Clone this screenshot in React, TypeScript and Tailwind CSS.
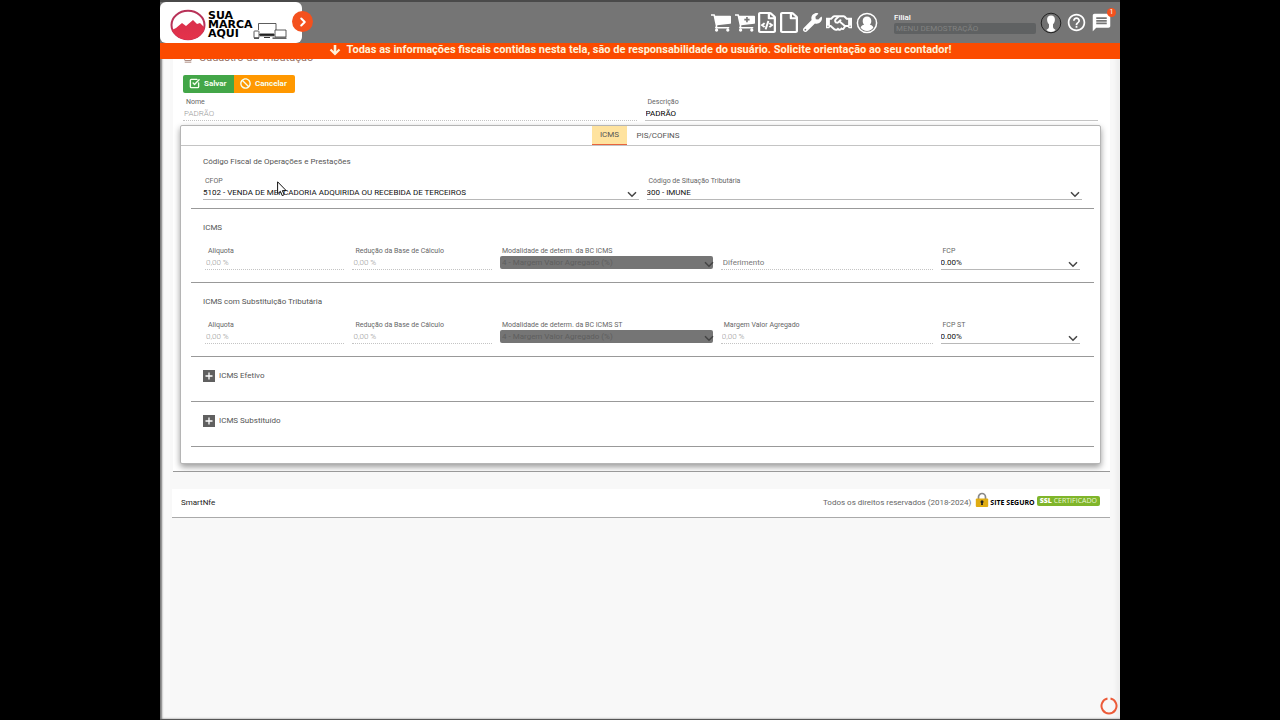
import type { ReactNode } from "react";
import { FaBan, FaRegFile, FaRegFileCode, FaRegHandshake, FaWrench } from "react-icons/fa";
import { MdHelpOutline, MdMessage } from "react-icons/md";
import { ChevronRight, SquareCheckBig, Stamp } from "lucide-react";

const CART =
  "M640 1536q0 52-38 90t-90 38-90-38-38-90 38-90 90-38 90 38 38 90zm896 0q0 52-38 90t-90 38-90-38-38-90 38-90 90-38 90 38 38 90zm128-1088v512q0 24-16.5 42.5t-40.5 21.5l-1044 122q13 60 13 70 0 16-24 64h920q26 0 45 19t19 45-19 45-45 19h-1024q-26 0-45-19t-19-45q0-11 8-31.5t16-36 21.5-40 15.5-29.5l-177-823h-204q-26 0-45-19t-19-45 19-45 45-19h256q16 0 28.5 6.5t19.5 15.5 13 24.5 8 26 5.500 29.500 4.500 26h1201q26 0 45 19t19 45z";

function Cart({ plus = false }: { plus?: boolean }) {
  return (
    <svg viewBox="64 240 1680 1440" className="h-[18px] w-[21px]" fill="currentColor" aria-hidden="true">
      <path d={CART} />
      {plus && <path d="M1020 480v420M810 690h420" stroke="#757575" strokeWidth="130" fill="none" />}
    </svg>
  );
}

function UserRing() {
  return (
    <svg viewBox="0 0 22 22" className="size-[22px]" aria-hidden="true">
      <circle cx="11" cy="11" r="9.6" fill="none" stroke="currentColor" strokeWidth="1.5" />
      <path d="M11 4.600c2.600 0 4.300 1.800 4.300 4.400 0 1.700-.6 2.800-1.500 3.800 2 .3 3.100 1.200 3.600 2.700A8 8 0 0 1 11 19 8 8 0 0 1 4.600 15.500c.5-1.500 1.600-2.400 3.600-2.700-.9-1-1.500-2.100-1.500-3.800 0-2.600 1.700-4.400 4.300-4.400z" fill="currentColor" />
    </svg>
  );
}

function Avatar() {
  return (
    <svg viewBox="0 0 22 22" className="size-[22px]" aria-hidden="true">
      <circle cx="11" cy="11" r="9.800" fill="#707070" stroke="#222" strokeWidth="1" />
      <path d="M11 3.500c2.800 0 4 1.800 3.900 4.300-.1 2.100-.9 3.500-1.900 4.500v2.700c.2 1.600 1.400 2 2.600 2.900A8.800 8.800 0 0 1 11 20a8.800 8.800 0 0 1-4.600-2.100c1.200-.9 2.400-1.300 2.600-2.900v-2.700c-1-1-1.800-2.400-1.900-4.500-.1-2.500 1.100-4.300 3.900-4.300z" fill="#fff" />
    </svg>
  );
}

function Brand() {
  return (
    <div className="flex items-center">
      <svg viewBox="0 0 36 32" className="h-8 w-9" aria-hidden="true">
        <defs>
          <linearGradient id="brand" x1="0" y1="0" x2="0" y2="1">
            <stop offset="0" stopColor="#d9304c" />
            <stop offset="1" stopColor="#e5324a" />
          </linearGradient>
          <clipPath id="disc">
            <ellipse cx="18" cy="16" rx="17" ry="15" />
          </clipPath>
        </defs>
        <ellipse cx="18" cy="16" rx="16.500" ry="14.200" fill="#fff" stroke="#b83258" strokeWidth="2" />
        <path clipPath="url(#disc)" d="M0 22l6-3 6-5 4 3 7-6 4 4 3-1 5 5 3 3v10H0z" fill="url(#brand)" />
      </svg>
      <div className="ml-0.5 font-['DejaVu_Sans',sans-serif] text-[11px] leading-[9px] font-bold text-black">
        <div>SUA</div>
        <div>MARCA</div>
        <div>AQUI</div>
      </div>
      <svg viewBox="0 0 34 18" className="mt-3 h-[18px] w-[34px]" fill="none" stroke="#333" strokeWidth=".8" aria-hidden="true">
        <path d="M5.500 8V1.500H23V8M6 12.500h14M22 8h11v7H22z" />
        <rect x="1" y="9" width="5" height="7" rx=".7" />
        <path d="M7 12h14v1.800H7zM11 15.500h6" fill="#111" strokeWidth="1" />
        <path d="M19.500 16.200H33.500M1 16.200h5" strokeWidth="1.200" />
      </svg>
    </div>
  );
}

function Chevron({ className }: { className: string }) {
  return (
    <svg viewBox="0 0 10 7" className={`pointer-events-none absolute h-[7px] w-2.5 ${className}`} fill="none" stroke="#444" strokeWidth="1.500" aria-hidden="true">
      <path d="M1 1.200l4 4 4-4" />
    </svg>
  );
}

type FieldProps = { id: string; label: string; value: string; disabled?: boolean };

function TextField({ id, label, value, disabled = false }: FieldProps) {
  return (
    <div className="min-w-0">
      <label htmlFor={id} className="block pl-[3px] text-[7px] leading-[10px] text-[#666]">
        {label}
      </label>
      <input
        id={id}
        defaultValue={value}
        disabled={disabled}
        className="block h-3.5 w-full border-b border-[#c4c4c4] bg-transparent pl-px text-[8px] leading-3 text-black disabled:border-dotted disabled:font-light disabled:text-[#999]"
      />
    </div>
  );
}

function SelectField({ id, label, value, disabled = false }: FieldProps) {
  return (
    <div className="min-w-0">
      <label htmlFor={id} className="block pl-0.5 text-[7px] leading-[10px] text-[#666]">
        {label}
      </label>
      <div className={disabled ? "relative pb-px" : "relative"}>
        <select
          id={id}
          disabled={disabled}
          className="block h-3.5 w-full appearance-none border-b border-[#b8b8b8] bg-transparent text-[8px] leading-3 text-[#111] disabled:h-[13px] disabled:rounded-xs disabled:border-0 disabled:bg-[#757575] disabled:pl-0.5 disabled:text-[#5e5e5e] disabled:opacity-100"
        >
          <option>{value}</option>
        </select>
        <Chevron className={disabled ? "-right-px bottom-0.5" : "right-0.5 bottom-0.5"} />
      </div>
    </div>
  );
}

function TaxSection({ title, children }: { title: string; children: ReactNode }) {
  return (
    <section className="border-b border-[#999] pt-[13px] pr-3.5 pb-3 pl-3">
      <h2 className="text-[8px] leading-3 text-[#555]">{title}</h2>
      <div className="mt-3 grid grid-cols-[139fr_139fr_212fr_211fr_139fr] gap-2 pl-0.5">{children}</div>
    </section>
  );
}

function Collapsed({ title }: { title: string }) {
  return (
    <section className="border-b border-[#999] pt-[13px] pb-[19px] pl-3">
      <button type="button" className="flex h-3 items-center gap-1 text-[8px] leading-3 text-[#555]">
        <svg viewBox="0 0 12 12" className="size-3" aria-hidden="true">
          <path d="M0 0h12v12H0z" fill="#606060" />
          <path d="M6 2.500v7M2.500 6h7" stroke="#fff" strokeWidth="1.300" />
        </svg>
        {title}
      </button>
    </section>
  );
}

export default function App() {
  return (
    <div className="min-h-screen bg-black px-[12.5%] font-[Roboto,sans-serif]">
      <div className="relative flex min-h-screen flex-col border-b border-[#555] bg-[#f8f8f8] shadow-[inset_2px_0_2px_#777,inset_-4px_0_4px_#eee]">
        <header className="flex h-[43px] items-center border-t-2 border-[#4a4a4a] bg-[#757575] text-white">
          <div className="relative flex h-[41px] w-[142px] items-center rounded-md bg-white pt-1 pl-2.5">
            <Brand />
            <button type="button" aria-label="Abrir menu" className="absolute top-[9px] -right-[11px] flex size-[21px] items-center justify-center rounded-full bg-[#f4511e]">
              <ChevronRight className="size-3.5" strokeWidth={3.5} />
            </button>
          </div>
          <nav className="ml-auto flex items-center">
            <button type="button" aria-label="Vendas" className="mr-[3px]"><Cart /></button>
            <button type="button" aria-label="Nova venda"><Cart plus /></button>
            <button type="button" aria-label="XML" className="flex w-[22px] justify-center"><FaRegFileCode className="h-[21px] w-[18px]" preserveAspectRatio="none" /></button>
            <button type="button" aria-label="Documento" className="flex w-[22px] justify-center"><FaRegFile className="h-[21px] w-[18px]" preserveAspectRatio="none" /></button>
            <button type="button" aria-label="Ferramentas" className="ml-[3px]"><FaWrench className="size-[19px]" /></button>
            <button type="button" aria-label="Parceiros" className="ml-1"><FaRegHandshake className="size-[26px]" /></button>
            <button type="button" aria-label="Perfil" className="ml-1"><UserRing /></button>
          </nav>
          <div className="ml-4 w-[142px]">
            <label htmlFor="filial" className="block text-[8px] leading-[11px] font-medium">Filial</label>
            <input id="filial" disabled defaultValue="MENU DEMOSTRAÇÃO" className="block h-[11px] w-full rounded-xs bg-[#5f6162] pl-0.5 text-[8px] leading-[11px] text-[#818181]" />
          </div>
          <div className="mr-2 ml-1 flex items-center gap-1">
            <button type="button" aria-label="Conta"><Avatar /></button>
            <button type="button" aria-label="Ajuda"><MdHelpOutline className="size-[21px]" /></button>
            <button type="button" aria-label="Mensagens" className="relative">
              <MdMessage className="size-[21px]" />
              <span className="absolute -top-1 -right-1 size-[9px] rounded-full bg-[#f4511e] text-center text-[7px] leading-[9px]">1</span>
            </button>
          </div>
        </header>
        <div role="alert" className="flex h-4 items-center justify-center gap-1.5 bg-[#fb4b00] pb-0.5 text-[11px] leading-[14px] font-bold text-[#fff1d8]">
          <svg viewBox="0 0 12 12" className="size-3" fill="none" stroke="currentColor" aria-hidden="true">
            <path d="M6 1v8" strokeWidth="2.600" />
            <path d="M1.500 5.500L6 10l4.500-4.500" strokeWidth="2.200" />
          </svg>
          Todas as informações fiscais contidas nesta tela, são de responsabilidade do usuário. Solicite orientação ao seu contador!
        </div>

        <main className="mr-2.5 ml-[13px] overflow-hidden border-b border-[#999] bg-white pr-[9px] pb-[7px] pl-[7px]">
          <h1 className="-mt-2 flex items-center gap-1.5 pl-[3px] text-[11px] leading-[14px] text-[#9b7468]">
            <Stamp className="size-2.5" />
            Cadastro de Tributação
          </h1>
          <div className="mt-[10px] ml-[3px] flex text-[8px] leading-3 font-bold text-[#f6fff0]">
            <button type="button" className="flex h-[18px] w-[51px] items-center gap-1 rounded-l-xs bg-[#43a648] pb-px pl-1.5">
              <SquareCheckBig className="size-[11px]" strokeWidth={3} />
              Salvar
            </button>
            <button type="button" className="flex h-[18px] w-[61px] items-center gap-1 rounded-r-xs bg-[#ff9800] pb-px pl-1.5">
              <FaBan className="size-[11px]" />
              Cancelar
            </button>
          </div>
          <div className="mt-1 grid grid-cols-2 gap-2 pr-[3px] pl-[3px]">
            <TextField id="nome" label="Nome" value="PADRÃO" disabled />
            <TextField id="descricao" label="Descrição" value="PADRÃO" />
          </div>

          <div className="mt-1 rounded-xs border border-[#b5b5b5] bg-white pb-4 shadow-[0_3px_6px_rgba(0,0,0,0.4)]">
            <div role="tablist" className="flex h-5 justify-center border-b border-[#c4c4c4] text-[8px] text-[#555]">
              <button type="button" role="tab" aria-selected="true" className="w-[35px] border-b border-[#e8643c] bg-[#ffe39f]">ICMS</button>
              <button type="button" role="tab" aria-selected="false" className="w-[62px]">PIS/COFINS</button>
            </div>
            <div className="pr-1.5 pl-2.5">
              <section className="border-b border-[#999] pt-[10px] pr-3 pb-2 pl-3">
                <h2 className="text-[8px] leading-3 text-[#555]">Código Fiscal de Operações e Prestações</h2>
                <div className="mt-2 grid grid-cols-2 gap-2">
                  <SelectField id="cfop" label="CFOP" value="5102 - VENDA DE MERCADORIA ADQUIRIDA OU RECEBIDA DE TERCEIROS" />
                  <SelectField id="cst" label="Código de Situação Tributária" value="300 - IMUNE" />
                </div>
              </section>
              <TaxSection title="ICMS">
                <TextField id="aliquota" label="Aliquota" value="0,00 %" disabled />
                <TextField id="reducao" label="Redução da Base de Cálculo" value="0,00 %" disabled />
                <SelectField id="modalidade" label="Modalidade de determ. da BC ICMS" value="4 - Margem Valor Agregado (%)" disabled />
                <div className="min-w-0 pt-[10px]">
                  <input aria-label="Diferimento" placeholder="Diferimento" className="block h-3.5 w-full border-b border-dotted border-[#c4c4c4] pl-0.5 text-[8px] leading-3 placeholder:text-[#777]" />
                </div>
                <SelectField id="fcp" label="FCP" value="0.00%" />
              </TaxSection>
              <TaxSection title="ICMS com Substituição Tributária">
                <TextField id="aliquota-st" label="Aliquota" value="0,00 %" disabled />
                <TextField id="reducao-st" label="Redução da Base de Cálculo" value="0,00 %" disabled />
                <SelectField id="modalidade-st" label="Modalidade de determ. da BC ICMS ST" value="4 - Margem Valor Agregado (%)" disabled />
                <TextField id="mva" label="Margem Valor Agregado" value="0,00 %" disabled />
                <SelectField id="fcp-st" label="FCP ST" value="0.00%" />
              </TaxSection>
              <Collapsed title="ICMS Efetivo" />
              <Collapsed title="ICMS Substituído" />
            </div>
          </div>
        </main>

        <footer className="mt-[17px] mr-2.5 ml-3 flex h-[29px] items-center justify-between border-b border-[#aaa] bg-white pr-2.5 pl-[9px] text-[8px] text-[#666]">
          <span className="text-[#222]">SmartNfe</span>
          <div className="flex items-center">
            <span>Todos os direitos reservados (2018-2024)</span>
            <svg viewBox="0 0 14 16" className="mb-1.5 ml-1 h-4 w-3.5" aria-hidden="true">
              <path d="M3.500 8V5a3.500 3.500 0 0 1 7 0v3" fill="none" stroke="#888" strokeWidth="1.700" />
              <rect x=".8" y="6.500" width="12.400" height="8.500" rx="1" fill="#dfac13" />
              <circle cx="7" cy="9.800" r="1.500" fill="#222" />
              <path d="M6.400 10h1.200l.4 3H6z" fill="#222" />
            </svg>
            <span className="ml-px font-['Open_Sans',sans-serif] text-[7px] font-bold text-black">SITE SEGURO</span>
            <span className="mb-1 ml-0.5 rounded-xs bg-[#7fb52a] px-[3px] font-['Open_Sans',sans-serif] text-[7px] leading-[10px] text-[#eaf5d5]">
              <b className="font-extrabold text-white">SSL</b> CERTIFICADO
            </span>
          </div>
        </footer>

        <svg viewBox="0 0 18 18" className="absolute right-0.5 bottom-1 size-[18px]" fill="none" stroke="#ec5b39" strokeWidth="2" aria-hidden="true">
          <path d="M10.500 1.600a7.500 7.500 0 1 1-3 0" />
        </svg>
        <svg viewBox="0 0 10 16" className="pointer-events-none absolute top-[181px] left-[117px] h-4 w-2.5" aria-hidden="true">
          <path d="M.6.800v12l2.800-2.500 1.800 4.300 2-.9-1.800-4.100h3.800z" fill="#fff" stroke="#111" strokeWidth="1" />
        </svg>
      </div>
    </div>
  );
}
